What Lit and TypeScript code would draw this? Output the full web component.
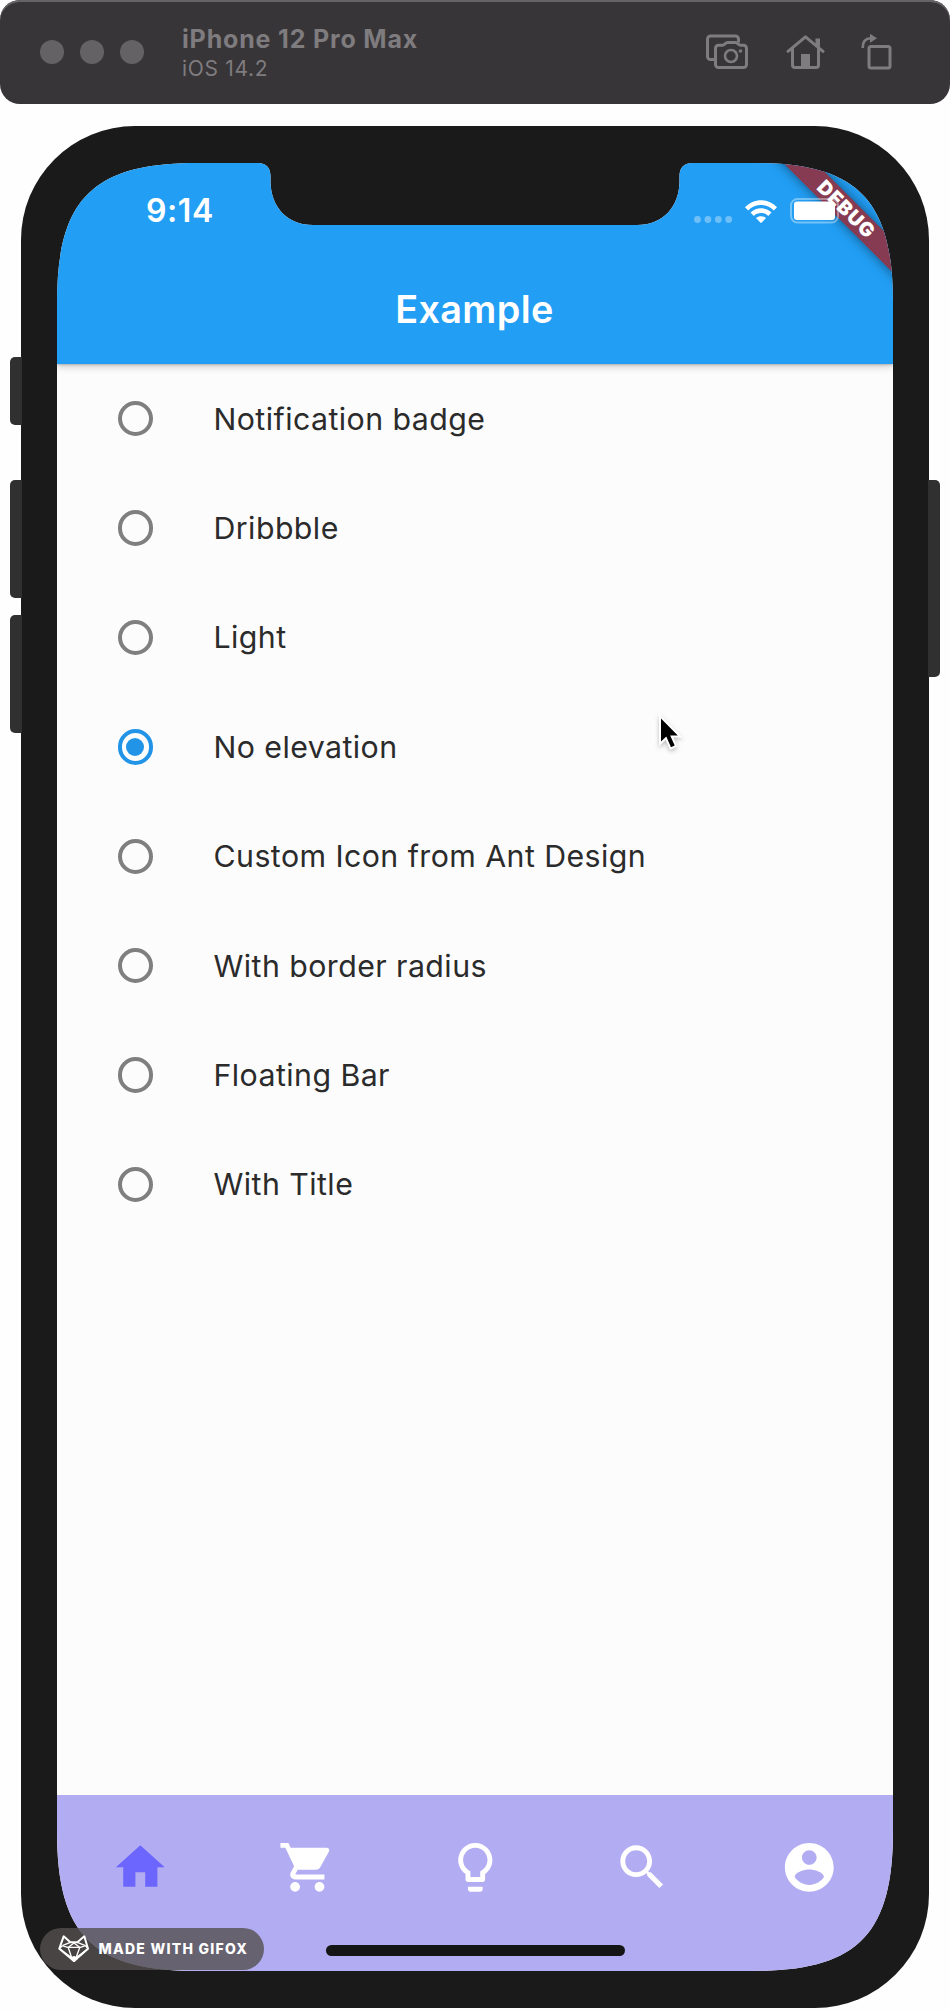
import { LitElement, html, css, svg } from "lit";
import { customElement, property, state } from "lit/decorators.js";
import { classMap } from "lit/directives/class-map.js";

const OPTIONS = [
  "Notification badge",
  "Dribbble",
  "Light",
  "No elevation",
  "Custom Icon from Ant Design",
  "With border radius",
  "Floating Bar",
  "With Title",
];

const NAV_ICONS = [
  { name: "home", path: "M10 20v-6h4v6h5v-8h3L12 3 2 12h3v8z" },
  {
    name: "cart",
    path: "M7 18c-1.1 0-1.99.9-1.99 2S5.9 22 7 22s2-.9 2-2-.9-2-2-2zM1 2v2h2l3.6 7.59-1.35 2.45c-.16.28-.25.61-.25.96 0 1.1.9 2 2 2h12v-2H7.42c-.14 0-.25-.11-.25-.25l.03-.12.9-1.63h7.45c.75 0 1.41-.41 1.75-1.03l3.58-6.49c.08-.14.12-.31.12-.48 0-.55-.45-1-1-1H5.21l-.94-2H1zm16 16c-1.1 0-1.99.9-1.99 2s.89 2 1.99 2 2-.9 2-2-.9-2-2-2z",
  },
  {
    name: "ideas",
    path: "M9 21c0 .55.45 1 1 1h4c.55 0 1-.45 1-1v-1H9v1zm3-19C8.14 2 5 5.14 5 9c0 2.38 1.19 4.47 3 5.74V17c0 .55.45 1 1 1h6c.55 0 1-.45 1-1v-2.26c1.81-1.27 3-3.36 3-5.74 0-3.86-3.14-7-7-7zm2.85 11.1l-.85.6V16h-4v-2.3l-.85-.6C7.8 12.16 7 10.63 7 9c0-2.76 2.24-5 5-5s5 2.24 5 5c0 1.63-.8 3.16-2.15 4.1z",
  },
  {
    name: "search",
    path: "M15.5 14h-.79l-.28-.27C15.41 12.59 16 11.11 16 9.5 16 5.91 13.09 3 9.5 3S3 5.91 3 9.5 5.91 16 9.5 16c1.61 0 3.09-.59 4.23-1.57l.27.28v.79l5 4.99L20.49 19l-4.99-5zm-6 0C7.01 14 5 11.99 5 9.5S7.01 5 9.5 5 14 7.01 14 9.5 11.99 14 9.5 14z",
  },
  {
    name: "account",
    path: "M12 2C6.48 2 2 6.48 2 12s4.48 10 10 10 10-4.48 10-10S17.52 2 12 2zm0 3c1.66 0 3 1.34 3 3s-1.34 3-3 3-3-1.34-3-3 1.34-3 3-3zm0 14.2c-2.5 0-4.71-1.28-6-3.22.03-1.99 4-3.08 6-3.08 1.99 0 5.97 1.09 6 3.08-1.29 1.94-3.5 3.22-6 3.22z",
  },
];

@customElement("simulator-bar")
export class SimulatorBar extends LitElement {
  static styles = css`
    :host {
      display: flex;
      align-items: center;
      box-sizing: border-box;
      height: 104px;
      padding: 0 58px 0 40px;
      border-radius: 20px;
      background: #383538;
      box-shadow: inset 0 2px 0 #666467;
      color: #7f7c7f;
    }
    .lights { display: flex; gap: 16px; }
    .light { width: 24px; height: 24px; border-radius: 50%; background: #646264; }
    .titles { flex: 1; margin: 3px 0 0 38px; }
    .device { font-size: 25px; line-height: 30px; font-weight: 700; letter-spacing: 0.83px; }
    .system { font-size: 21px; line-height: 29px; letter-spacing: 0.7px; }
    .tools { display: flex; }
    .tools svg { display: block; fill: none; stroke: currentColor; stroke-width: 3; stroke-linejoin: round; }
    .home { margin: 0 36px 0 37px; }
    .tools .solid { fill: currentColor; stroke: none; }
  `;

  render() {
    return html`
      <div class="lights">
        <span class="light"></span><span class="light"></span><span class="light"></span>
      </div>
      <div class="titles">
        <div class="device">iPhone 12 Pro Max</div>
        <div class="system">iOS 14.2</div>
      </div>
      <div class="tools">
        <svg width="43" height="36" viewBox="706 34 43 36">
          <path d="M714.5 59.5H710.5a3 3 0 0 1-3-3V39a3 3 0 0 1 3-3H735.5a3 3 0 0 1 3 3V42.5" />
          <path d="M718.5 45.2H722.5C724.5 45.2 725.5 42.5 727.5 42.5H735.5C737.5 42.5 738.5 45.2 740.5 45.2H743.5a3 3 0 0 1 3 3V64.5a3 3 0 0 1-3 3H718.5a3 3 0 0 1-3-3V48.2a3 3 0 0 1 3-3Z" />
          <circle cx="731" cy="56" r="6" stroke-width="2.6" />
          <circle class="solid" cx="740.5" cy="51" r="1.8" />
        </svg>
        <svg class="home" width="39" height="36" viewBox="785.5 34 39 36">
          <path d="M787.5 51.3L805 36.8L822.5 51.3" stroke-linecap="round" />
          <path d="M792 48V65a2.5 2.5 0 0 0 2.5 2.5H815.5a2.5 2.5 0 0 0 2.5-2.5V48" />
          <path class="solid" d="M800.5 54H809.5V67H800.5Z M815 38.5H819.5V48.5L815 44.5Z" />
        </svg>
        <svg width="31" height="36" viewBox="860.5 33 31 36">
          <rect x="868.5" y="45.5" width="21" height="21.5" rx="2" />
          <path d="M862.2 47C862 40.5 864.5 37.5 870.5 37.3" stroke-width="2.6" />
          <path class="solid" d="M869.5 32.8L876.5 37.2L869.5 41.8Z" />
        </svg>
      </div>
    `;
  }
}

@customElement("status-bar")
export class StatusBar extends LitElement {
  static styles = css`
    :host {
      position: relative;
      z-index: 2;
      display: flex;
      align-items: center;
      box-sizing: border-box;
      height: 92px;
      padding: 4px 54px 0 89px;
    }
    .time { flex: 1; font-size: 32px; line-height: 40px; font-weight: 600; letter-spacing: 0.6px; }
    svg { display: block; fill: #fff; }
    .signal { opacity: 0.35; margin: 16px 11px 0 0; }
    .battery { margin-left: 12px; }
  `;

  render() {
    return html`
      <div class="time">9:14</div>
      <svg class="signal" width="39" height="7" viewBox="0 0 39 7">
        ${[3.5, 13.9, 24.3, 34.7].map((x) => svg`<circle cx=${x} cy="3.5" r="3.4" />`)}
      </svg>
      <svg width="34" height="25" viewBox="0 0 34 25">
        <path d="M1 8.2C9.8-1.2 24.2-1.2 33 8.2L29.8 11.4C22.8 4.2 11.2 4.2 4.2 11.4Z" />
        <path d="M6.5 13.6C12.3 7.8 21.7 7.8 27.5 13.6L24.2 16.9C20.2 13.1 13.8 13.1 9.8 16.9Z" />
        <path d="M12 19.1C14.8 16.7 19.2 16.7 22 19.1L17.7 23.6Q17 24.3 16.3 23.6Z" />
      </svg>
      <svg class="battery" width="49" height="26" viewBox="0 0 49 26">
        <rect x="1" y="1" width="47" height="23.5" rx="6.5" fill="none" stroke="#fff" stroke-opacity="0.38" stroke-width="2" />
        <rect x="4" y="3.5" width="41" height="18.5" rx="3" />
      </svg>
    `;
  }
}

@customElement("radio-row")
export class RadioRow extends LitElement {
  @property() label = "";
  @property({ type: Boolean }) checked = false;

  static styles = css`
    :host { display: flex; align-items: center; height: 109.4px; padding-left: 60.5px; }
    .ring {
      display: grid;
      place-items: center;
      box-sizing: border-box;
      width: 35.4px;
      height: 35.4px;
      margin-right: 60.6px;
      border: 4px solid #7f7f7f;
      border-radius: 50%;
    }
    .on { border-color: #2194e8; }
    .on::after { content: ""; width: 18px; height: 18px; border-radius: 50%; background: #2194e8; }
    .label { font-size: 30.3px; line-height: 40px; letter-spacing: 0.44px; color: #2b2b2b; }
  `;

  render() {
    return html`
      <span class=${classMap({ ring: true, on: this.checked })}></span>
      <span class="label">${this.label}</span>
    `;
  }
}

@customElement("gifox-badge")
export class GifoxBadge extends LitElement {
  static styles = css`
    :host {
      display: flex;
      align-items: center;
      box-sizing: border-box;
      width: 224px;
      height: 42px;
      padding-left: 18px;
      border-radius: 21px;
      background: rgba(82, 79, 77, 0.8);
      color: #fff;
    }
    svg { display: block; margin-right: 9.5px; fill: none; stroke: #fff; stroke-width: 6; stroke-linejoin: round; }
    .thin { stroke-width: 4; }
    .text { font-size: 14px; line-height: 20px; font-weight: 800; letter-spacing: 1.25px; white-space: nowrap; }
    .nose { fill: #fff; }
  `;

  render() {
    return html`
      <svg width="31" height="28" viewBox="67 60 93 84">
        <path d="M84 64L104 82H125L146 64L157 101L115 138L71 101Z" />
        <path class="thin" d="M80 92L71 101M149 92L157 101M80 92L104 82M149 92L125 82M80 92L98 98L108 128M149 92L132 98L121 128M98 97H132M98 97L115 84L132 97M72 101L108 128M157 101L121 128" />
        <path class="nose" d="M106 130L115 126L124 130L115 138Z" />
      </svg>
      <span class="text">MADE WITH GIFOX</span>
    `;
  }
}

@customElement("app-root")
export class AppRoot extends LitElement {
  @state() private selected = 3;
  @state() private tab = 0;

  static styles = css`
    :host {
      position: relative;
      display: block;
      width: 950px;
      height: 2010px;
      overflow: hidden;
      background: #fefefe;
      font-family: Inter, "Liberation Sans", sans-serif;
    }
    .phone {
      position: relative;
      box-sizing: border-box;
      width: 908px;
      height: 1882px;
      margin: 22px 0 0 21px;
      padding: 37px 36px;
      border-radius: 114px;
      background: #1a1a1a;
    }
    .key { position: absolute; width: 12px; background: #303030; }
    .left { left: -11px; border-radius: 5px 0 0 5px; }
    .right { right: -11px; border-radius: 0 5px 5px 0; }
    .mute { top: 231px; height: 68px; }
    .up { top: 354px; height: 118px; }
    .down { top: 489px; height: 118px; }
    .power { top: 354px; height: 197px; }
    .screen {
      position: relative;
      display: flex;
      flex-direction: column;
      width: 836px;
      height: 1808px;
      background: #fcfcfc;
      clip-path: path("M0 140C0 36 36 0 140 0H201C209 0 213.5 5 213.5 13V19C214 44 230 62 256 62H580C606 62 622 44 622.5 19V13C622.5 5 627 0 635 0H696C800 0 836 36 836 140V1668C836 1772 800 1808 696 1808H140C36 1808 0 1772 0 1668Z");
    }
    .header {
      position: relative;
      z-index: 1;
      background: #229ef4;
      color: #fff;
      box-shadow: 0 2px 8px rgba(0, 0, 0, 0.22), 0 1px 2px rgba(0, 0, 0, 0.18);
    }
    .title {
      height: 109px;
      padding-right: 1px;
      line-height: 109px;
      text-align: center;
      font-size: 37.8px;
      font-weight: 600;
      letter-spacing: 0.4px;
    }
    .ribbon-clip { position: absolute; top: 0; right: 0; width: 160px; height: 160px; overflow: hidden; }
    .ribbon {
      position: absolute;
      left: 13px;
      top: 35px;
      width: 200px;
      height: 23.4px;
      line-height: 23.4px;
      transform: rotate(45deg);
      background: #873b52;
      box-shadow: 0 0 12px rgba(0, 0, 0, 0.5);
      text-align: center;
      font-size: 19.5px;
      font-weight: 900;
      letter-spacing: 1px;
    }
    .list { flex: 1; }
    .nav { height: 176px; background: #b2adf2; }
    .tabs { display: grid; grid-template-columns: repeat(5, 1fr); height: 144px; }
    .tab { display: grid; place-items: center; color: #fff; }
    .tab svg { display: block; width: 58.6px; height: 58.6px; fill: currentColor; }
    .tab.active { color: #6c66ff; }
    .indicator { width: 299px; height: 10.5px; margin: 6px auto 0; border-radius: 6px; background: #151515; }
    .badge { position: absolute; left: 40px; top: 1928px; }
    .cursor { position: absolute; left: 655px; top: 712px; filter: drop-shadow(0 2px 2px rgba(0, 0, 0, 0.25)); }
  `;

  render() {
    return html`
      <simulator-bar></simulator-bar>
      <div class="phone">
        <span class="key left mute"></span>
        <span class="key left up"></span>
        <span class="key left down"></span>
        <span class="key right power"></span>
        <div class="screen">
          <div class="header">
            <div class="ribbon-clip"><div class="ribbon">DEBUG</div></div>
            <status-bar></status-bar>
            <div class="title">Example</div>
          </div>
          <div class="list">
            ${OPTIONS.map(
              (label, i) => html`<radio-row
                .label=${label}
                .checked=${i === this.selected}
                @click=${() => (this.selected = i)}
              ></radio-row>`
            )}
          </div>
          <div class="nav">
            <div class="tabs">
              ${NAV_ICONS.map(
                (icon, i) => html`<div
                  class=${classMap({ tab: true, active: i === this.tab })}
                  @click=${() => (this.tab = i)}
                >
                  <svg viewBox="0 0 24 24"><path d=${icon.path} /></svg>
                </div>`
              )}
            </div>
            <div class="indicator"></div>
          </div>
        </div>
      </div>
      <gifox-badge class="badge"></gifox-badge>
      <svg class="cursor" width="30" height="42" viewBox="655 712 30 42">
        <path
          d="M661 718.5V741.5L666.3 736.5L671 747.2L674.7 745.5L670.2 735.5H677.8Z"
          fill="#000"
          stroke="#fff"
          stroke-width="4"
          paint-order="stroke"
        />
      </svg>
    `;
  }
}
